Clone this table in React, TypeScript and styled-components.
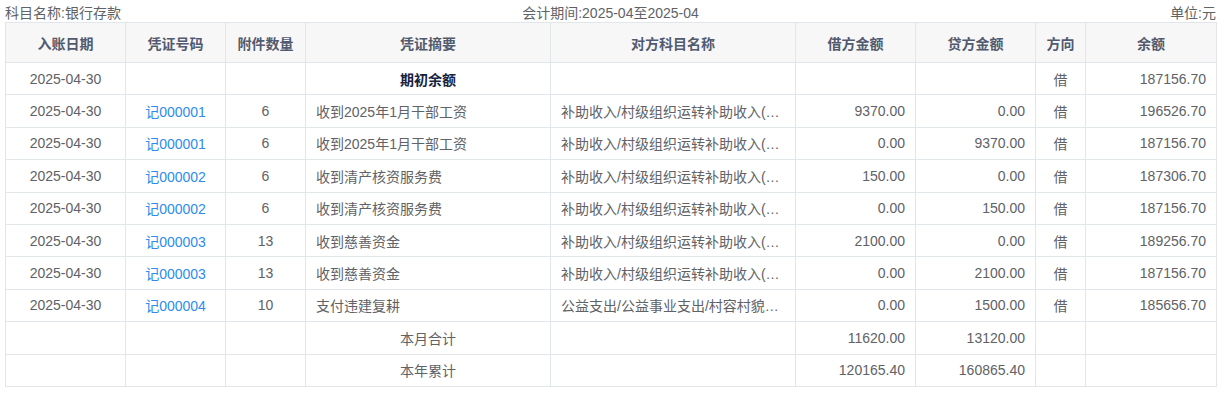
import React from 'react';
import styled, { createGlobalStyle } from 'styled-components';

const GlobalStyle = createGlobalStyle`
  body {
    margin: 0;
    background: #fff;
    font-family: "Liberation Sans", "Noto Sans CJK SC", sans-serif;
  }
`;

const Page = styled.div`
  padding: 0 7px 0 5px;
  width: 1211px;
`;

const InfoBar = styled.div`
  display: flex;
  justify-content: space-between;
  align-items: center;
  height: 22px;
  padding-top: 1px;
  box-sizing: border-box;
  font-size: 14px;
  color: #606266;
`;

const InfoItem = styled.span<{ $align: 'left' | 'center' | 'right' }>`
  flex: 1;
  text-align: ${(p) => p.$align};
`;

const Table = styled.table`
  width: 1211px;
  border-collapse: collapse;
  table-layout: fixed;
  font-size: 14px;
  color: #606266;
`;

const HeadCell = styled.th`
  height: 39px;
  padding: 0;
  background: #f7f7f7;
  border: 1px solid #e1e6eb;
  font-weight: bold;
  color: #515a6e;
  text-align: center;
`;

const Row = styled.tr`
  height: 32.4px;
`;

const Cell = styled.td<{ $align?: 'left' | 'center' | 'right'; $bold?: boolean }>`
  padding: 0 10px;
  border: 1px solid #e1e6eb;
  text-align: ${(p) => p.$align || 'center'};
  font-weight: ${(p) => (p.$bold ? 'bold' : 'normal')};
  color: ${(p) => (p.$bold ? '#17233d' : '#606266')};
  white-space: nowrap;
  overflow: hidden;
  text-overflow: ellipsis;
`;

const VoucherLink = styled.a`
  color: #2d8cf0;
  text-decoration: none;
  cursor: pointer;
`;

const columns = [
  { title: '入账日期', width: 120 },
  { title: '凭证号码', width: 100 },
  { title: '附件数量', width: 80 },
  { title: '凭证摘要', width: 245 },
  { title: '对方科目名称', width: 245 },
  { title: '借方金额', width: 120 },
  { title: '贷方金额', width: 120 },
  { title: '方向', width: 50 },
  { title: '余额', width: 131 },
];

const income = '补助收入/村级组织运转补助收入(村级组织运转补助收入)';
const rows = [
  { no: '记000001', att: '6', memo: '收到2025年1月干部工资', acct: income, debit: '9370.00', credit: '0.00', bal: '196526.70' },
  { no: '记000001', att: '6', memo: '收到2025年1月干部工资', acct: income, debit: '0.00', credit: '9370.00', bal: '187156.70' },
  { no: '记000002', att: '6', memo: '收到清产核资服务费', acct: income, debit: '150.00', credit: '0.00', bal: '187306.70' },
  { no: '记000002', att: '6', memo: '收到清产核资服务费', acct: income, debit: '0.00', credit: '150.00', bal: '187156.70' },
  { no: '记000003', att: '13', memo: '收到慈善资金', acct: income, debit: '2100.00', credit: '0.00', bal: '189256.70' },
  { no: '记000003', att: '13', memo: '收到慈善资金', acct: income, debit: '0.00', credit: '2100.00', bal: '187156.70' },
  { no: '记000004', att: '10', memo: '支付违建复耕', acct: '公益支出/公益事业支出/村容村貌整治支出', debit: '0.00', credit: '1500.00', bal: '185656.70' },
];

const totals = [
  { label: '本月合计', debit: '11620.00', credit: '13120.00' },
  { label: '本年累计', debit: '120165.40', credit: '160865.40' },
];

export default function App() {
  return (
    <Page>
      <GlobalStyle />
      <InfoBar>
        <InfoItem $align="left">科目名称:银行存款</InfoItem>
        <InfoItem $align="center">会计期间:2025-04至2025-04</InfoItem>
        <InfoItem $align="right">单位:元</InfoItem>
      </InfoBar>
      <Table>
        <colgroup>
          {columns.map((c) => (
            <col key={c.title} style={{ width: c.width }} />
          ))}
        </colgroup>
        <thead>
          <tr>
            {columns.map((c) => (
              <HeadCell key={c.title}>{c.title}</HeadCell>
            ))}
          </tr>
        </thead>
        <tbody>
          <Row>
            <Cell>2025-04-30</Cell>
            <Cell />
            <Cell />
            <Cell $bold>期初余额</Cell>
            <Cell />
            <Cell />
            <Cell />
            <Cell>借</Cell>
            <Cell $align="right">187156.70</Cell>
          </Row>
          {rows.map((r, i) => (
            <Row key={i}>
              <Cell>2025-04-30</Cell>
              <Cell>
                <VoucherLink>{r.no}</VoucherLink>
              </Cell>
              <Cell>{r.att}</Cell>
              <Cell $align="left">{r.memo}</Cell>
              <Cell $align="left">{r.acct}</Cell>
              <Cell $align="right">{r.debit}</Cell>
              <Cell $align="right">{r.credit}</Cell>
              <Cell>借</Cell>
              <Cell $align="right">{r.bal}</Cell>
            </Row>
          ))}
          {totals.map((t) => (
            <Row key={t.label}>
              <Cell />
              <Cell />
              <Cell />
              <Cell>{t.label}</Cell>
              <Cell />
              <Cell $align="right">{t.debit}</Cell>
              <Cell $align="right">{t.credit}</Cell>
              <Cell />
              <Cell />
            </Row>
          ))}
        </tbody>
      </Table>
    </Page>
  );
}
